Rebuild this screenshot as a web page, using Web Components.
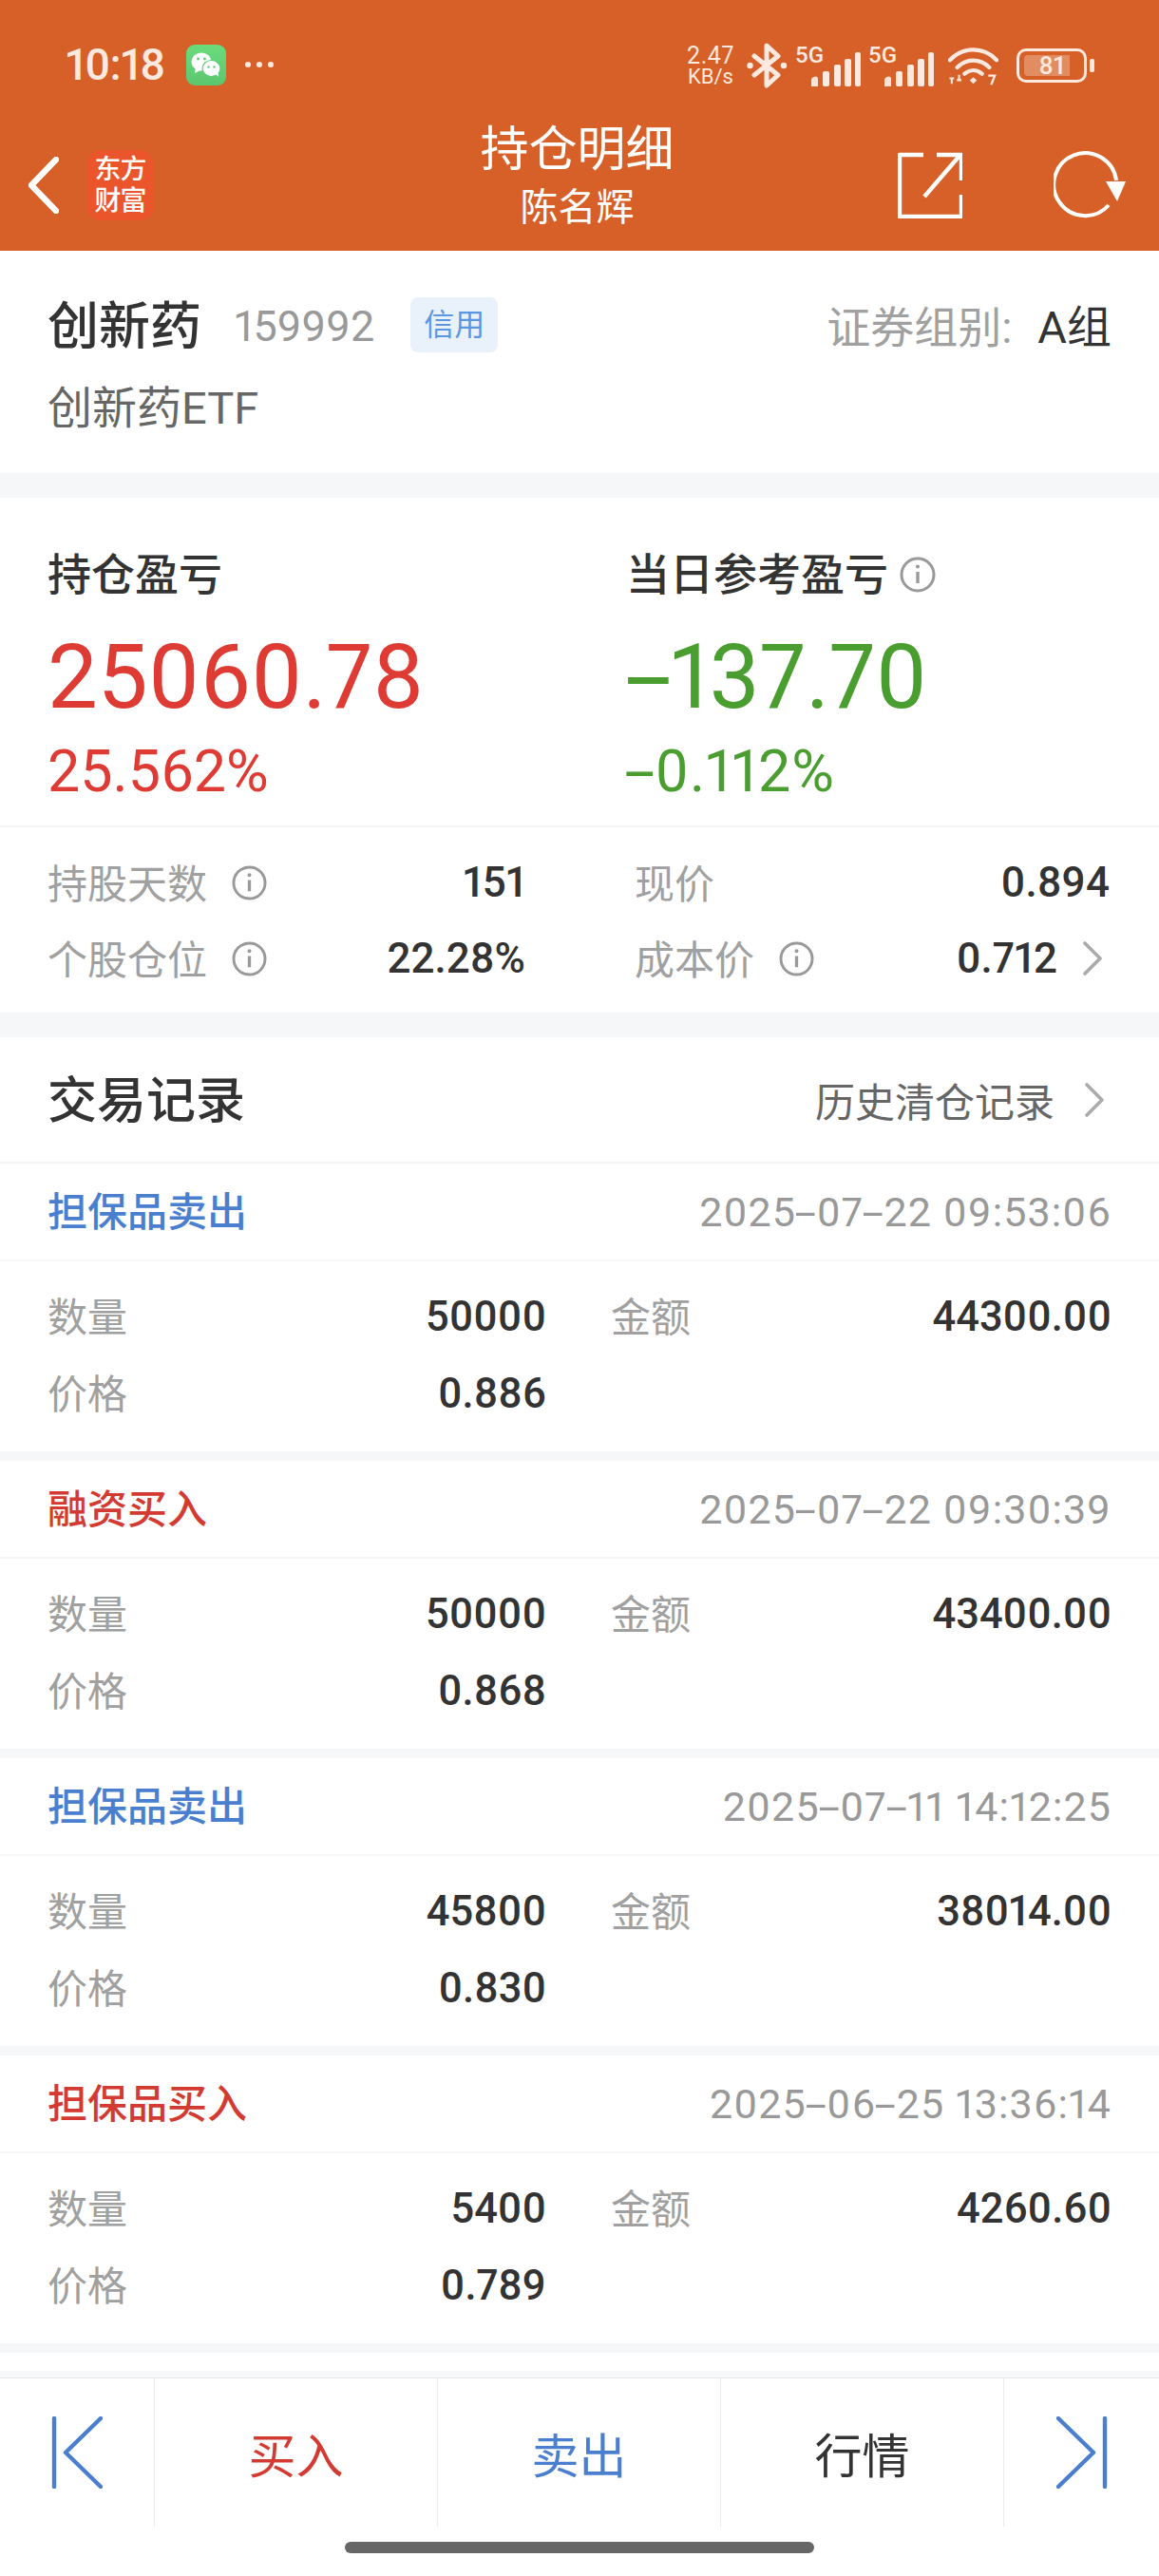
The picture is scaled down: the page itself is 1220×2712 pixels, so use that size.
<!DOCTYPE html>
<html lang="zh">
<head>
<meta charset="utf-8">
<title>持仓明细</title>
<style>
html, body { margin: 0; padding: 0; background: #fff; }
body {
    width: 1220px;
    height: 2712px;
    overflow: hidden;
    display: flex;
    flex-direction: column;
    font-family: Roboto, "Noto Sans CJK SC", sans-serif;
    font-variant-numeric: proportional-nums;
    color: #333;
}
</style>
</head>
<body>
<app-header heading="持仓明细" sub="陈名辉"></app-header>
<stock-card></stock-card>
<profit-panel></profit-panel>
<trade-head></trade-head>
<trade-record tone="sell" name="担保品卖出" time="2025-07-22 09:53:06" qty="50000" amount="44300.00" price="0.886"></trade-record>
<trade-record tone="buy" name="融资买入" time="2025-07-22 09:30:39" qty="50000" amount="43400.00" price="0.868"></trade-record>
<trade-record tone="sell" name="担保品卖出" time="2025-07-11 14:12:25" qty="45800" amount="38014.00" price="0.830"></trade-record>
<trade-record tone="buy" name="担保品买入" time="2025-06-25 13:36:14" qty="5400" amount="4260.60" price="0.789"></trade-record>
<bottom-bar></bottom-bar>

<script>
const INFO = (size) => `<svg width="${size}" height="${size}" viewBox="0 0 38 38" fill="none" stroke="#999" stroke-width="3"><circle cx="19" cy="19" r="17"/><path d="M19 16v12" stroke-width="3.4"/><circle cx="19" cy="10.5" r="2" fill="#999" stroke="none"/></svg>`
const CHEVRON = `<svg width="22" height="38" viewBox="0 0 22 38" fill="none" stroke="#aaa" stroke-width="3.6" stroke-linecap="round" stroke-linejoin="round"><path d="M3 3l16 16L3 35"/></svg>`
// the app font draws a long hyphen, roboto's is short
const DASH_CSS = `.dash { display: inline-block; width: .5em; text-align: center; transform: scaleX(1.9); }`
const dash = (s) => s.replace(/-/g, '<span class="dash">-</span>')

class StatusBar extends HTMLElement {
    constructor() {
        super()
        this.shadow = this.attachShadow({ mode: 'open' })
    }
    connectedCallback() {
        const bars = `<svg class="sig" width="52" height="36" viewBox="0 0 52 36" fill="#fde9df"><path d="M0 36v-6a4 4 0 0 1 7-3v9z" opacity=".95"/><rect x="12" y="20" width="7" height="16" rx="2"/><rect x="24" y="13" width="7" height="23" rx="2"/><rect x="35" y="7" width="7" height="29" rx="2"/><rect x="46" y="0" width="6" height="36" rx="2"/></svg>`
        this.shadow.innerHTML = /*html*/ `
            <style>
:host {
    display: flex;
    height: 118px;
    align-items: flex-start;
    justify-content: space-between;
    padding: 45px 68px 0 69px;
    box-sizing: border-box;
    color: #fde9df;
}
.left, .right { display: flex; align-items: center; }
.time { font-size: 46px; line-height: 46px; font-weight: 500; letter-spacing: -.8px; width: 127px; }
.wx { display: block; }
.dots { display: flex; gap: 6px; margin-left: 20px; }
.dots i { width: 6px; height: 6px; border-radius: 50%; background: #fde9df; display: block; }
.speed { font-size: 22px; line-height: 21px; text-align: center; width: 52px; margin-top: 0; }
.speed div:first-child { font-size: 25px; line-height: 23px; letter-spacing: .6px; }
.bt { margin-left: 12px; }
.net { display: flex; position: relative; width: 69px; height: 44px; margin-left: 8px; align-items: flex-end; justify-content: flex-end; }
.net b { position: absolute; left: 0; top: 0; font-size: 24px; line-height: 22px; font-weight: 500; }
.net .sig { display: block; }
.wifi { margin-left: 15px; }
.bat { margin-left: 19px; position: relative; width: 82px; height: 36px; display: flex; align-items: center; }
.shell { width: 74px; height: 36px; border: 3px solid #fde9df; border-radius: 10px; box-sizing: border-box; display: flex; align-items: center; padding: 4px 5px; }
.fill { width: 82%; height: 100%; background: rgba(253,233,223,.32); border-radius: 4px 0 0 4px; position: relative; }
.num { position: absolute; left: 0; width: 74px; text-align: center; font-size: 26px; line-height: 36px; font-weight: 500; }
.nub { width: 5px; height: 14px; background: #fde9df; border-radius: 2px; margin-left: 3px; }
            </style>
            <div class="left">
                <div class="time">10:18</div>
                <svg class="wx" width="42" height="43" viewBox="0 0 42 43">
                    <defs><linearGradient id="g" x1="0" y1="0" x2="0" y2="1"><stop offset="0" stop-color="#6adb7c"/><stop offset="1" stop-color="#5cc66f"/></linearGradient></defs>
                    <rect width="42" height="43" rx="9" fill="url(#g)"/>
                    <ellipse cx="16" cy="18" rx="10.5" ry="9.5" fill="#fff"/>
                    <path d="M10 24l-1 6 6-3z" fill="#fff"/>
                    <ellipse cx="26.5" cy="25" rx="9.5" ry="8.5" fill="#fff" stroke="#60cd74" stroke-width="1.2"/>
                    <path d="M31 31l3 3-.5-5z" fill="#fff"/>
                    <circle cx="12.5" cy="15" r="1.4" fill="#60cd74"/><circle cx="19.5" cy="15" r="1.4" fill="#60cd74"/>
                    <circle cx="23.5" cy="23.5" r="1.2" fill="#60cd74"/><circle cx="29.5" cy="23.5" r="1.2" fill="#60cd74"/>
                </svg>
                <div class="dots"><i></i><i></i><i></i></div>
            </div>
            <div class="right">
                <div class="speed"><div>2.47</div><div>KB/s</div></div>
                <svg class="bt" width="43" height="48" viewBox="0 0 43 48" fill="none" stroke="#fde9df" stroke-width="5" stroke-linecap="round" stroke-linejoin="round"><path d="M8 14l25 20-12 11V3l12 11L8 34"/><circle cx="3.500" cy="24" r="3.200" fill="#fde9df" stroke="none"/><circle cx="39" cy="24" r="3.200" fill="#fde9df" stroke="none"/></svg>
                <div class="net"><b>5G</b>${bars}</div>
                <div class="net"><b>5G</b>${bars}</div>
                <svg class="wifi" width="53" height="44" viewBox="0 0 55 44" fill="none" stroke="#fde9df" stroke-width="4.400" stroke-linecap="round"><path d="M2 16C16 1 39 1 53 16"/><path d="M10 24c10-10 25-10 35 0"/><path d="M18 31c6-5 13-5 19 0"/><path d="M23.500 38l4 4 4-4-4-3z" fill="#fde9df" stroke="none"/><path d="M4 36v6M1.500 36h5M12 32v6M9.500 38h5" stroke-width="2.200" stroke-linecap="butt"/><path d="M44 33h7l-4 10" stroke-width="2.400" stroke-linecap="butt"/></svg>
                <div class="bat"><div class="shell"><div class="fill"></div></div><div class="num">81</div><div class="nub"></div></div>
            </div>
            `
    }
}

class AppHeader extends HTMLElement {
    constructor() {
        super()
        this.shadow = this.attachShadow({ mode: 'open' })
    }
    connectedCallback() {
        this.shadow.innerHTML = /*html*/ `
            <style>
:host { display: block; background: #d66027; color: #fff; height: 264px; flex: none; }
.nav { display: grid; grid-template-columns: 1fr auto 1fr; height: 146px; padding: 0 35px 0 30px; box-sizing: border-box; }
.left { display: flex; align-items: center; gap: 29px; padding-top: 8px; }
.logo {
    width: 71px; height: 74px; border-radius: 15px; background: #ea552b;
    display: flex; flex-direction: column; align-items: center; justify-content: center;
    font-size: 28px; line-height: 33px; font-weight: 500; letter-spacing: -1px;
}
.mid { text-align: center; }
.t { font-size: 51px; line-height: 60px; margin-top: 10px; }
.s { font-size: 40px; line-height: 52px; margin-top: 5px; }
.right { display: flex; justify-content: flex-end; align-items: center; gap: 96px; padding-top: 8px; }
svg { display: block; }
            </style>
            <status-bar></status-bar>
            <div class="nav">
                <div class="left">
                    <svg width="32" height="60" viewBox="0 0 32 60" fill="none" stroke="#fff" stroke-width="6.400" stroke-linecap="round" stroke-linejoin="round"><path d="M29 3L3 30l26 27"/></svg>
                    <div class="logo"><div>东方</div><div>财富</div></div>
                </div>
                <div class="mid">
                    <div class="t">${this.getAttribute('heading')}</div>
                    <div class="s">${this.getAttribute('sub')}</div>
                </div>
                <div class="right">
                    <svg width="68" height="70" viewBox="0 0 68 70" fill="none" stroke="#fff" stroke-width="4.400" stroke-linejoin="round"><path d="M27 3H2v65h65V45"/><path d="M41 3h26v27"/><path d="M65 4L28 47"/></svg>
                    <svg width="76" height="72" viewBox="0 0 76 72" fill="none"><path d="M58 57A33 33 0 1 1 66 31" stroke="#fff" stroke-width="4"/><path d="M55 32h21l-9 21z" fill="#fff"/></svg>
                </div>
            </div>
            `
    }
}

class StockCard extends HTMLElement {
    constructor() {
        super()
        this.shadow = this.attachShadow({ mode: 'open' })
    }
    connectedCallback() {
        this.shadow.innerHTML = /*html*/ `
            <style>
:host { display: block; height: 260px; flex: none; box-sizing: border-box; padding: 0 50px; border-bottom: 26px solid #f6f7f9; }
.top { display: flex; align-items: center; height: 90px; padding-top: 36px; box-sizing: content-box; }
.name { font-size: 54px; font-weight: 500; line-height: 90px; }
.code { font-size: 45px; color: #999; margin-left: 35px; padding-bottom: 4px; }
.tag { margin-left: 38px; margin-bottom: 6px; width: 92px; height: 58px; line-height: 58px; text-align: center; border-radius: 8px; background: #e9f1fb; color: #5b96e2; font-size: 32px; }
.group { margin-left: auto; font-size: 47px; color: #333; padding-bottom: 10px; }
.group span { color: #a0a0a0; font-size: 46px; margin-right: 27px; }
.full { font-size: 47px; color: #666; line-height: 56px; margin-top: 12px; }
            </style>
            <div class="top">
                <div class="name">创新药</div>
                <div class="code">159992</div>
                <div class="tag">信用</div>
                <div class="group"><span>证券组别:</span>A组</div>
            </div>
            <div class="full">创新药ETF</div>
            `
    }
}

class StatRow extends HTMLElement {
    constructor() {
        super()
        this.shadow = this.attachShadow({ mode: 'open' })
    }
    connectedCallback() {
        const hasInfo = this.hasAttribute('info')
        const hasMore = this.hasAttribute('more')
        this.shadow.innerHTML = /*html*/ `
            <style>
:host { display: flex; align-items: center; height: 80px; }
.l { font-size: 42px; color: #a0a0a0; padding-bottom: 4px; }
svg { display: block; }
.i { margin-left: 26px; }
.v { margin-left: auto; font-size: 44px; font-weight: 500; color: #333; }
.m { margin-left: 26px; margin-right: 7px; }
            </style>
            <div class="l">${this.getAttribute('label')}</div>
            ${hasInfo ? `<div class="i">${INFO(37)}</div>` : ''}
            <div class="v">${this.getAttribute('value')}</div>
            ${hasMore ? `<div class="m">${CHEVRON}</div>` : ''}
            `
    }
}

class ProfitPanel extends HTMLElement {
    constructor() {
        super()
        this.shadow = this.attachShadow({ mode: 'open' })
    }
    connectedCallback() {
        this.shadow.innerHTML = /*html*/ `
            <style>
:host { display: block; height: 568px; flex: none; box-sizing: border-box; border-bottom: 26px solid #f6f7f9; }
.big { display: grid; grid-template-columns: 609px 1fr; padding: 48px 0 0 50px; height: 347px; box-sizing: border-box; border-bottom: 2px solid #f6f6f7; }
.h { display: flex; align-items: center; gap: 12px; font-size: 46px; font-weight: 500; line-height: 66px; }
.a { font-size: 94px; line-height: 110px; margin-top: 20px; }
.p { font-size: 61px; line-height: 70px; margin-top: 9px; }
.red { color: #de3b34; }
.green { color: #4a9d2f; }
.p.green { letter-spacing: 1px; }
svg { display: block; }
.stats { display: grid; grid-template-columns: 503px 500px; column-gap: 115px; padding: 18px 0 0 50px; }
${DASH_CSS}
            </style>
            <div class="big">
                <div>
                    <div class="h">持仓盈亏</div>
                    <div class="a red">25060.78</div>
                    <div class="p red">25.562%</div>
                </div>
                <div>
                    <div class="h">当日参考盈亏${INFO(38)}</div>
                    <div class="a green">${dash('-137.70')}</div>
                    <div class="p green">${dash('-0.112%')}</div>
                </div>
            </div>
            <div class="stats">
                <stat-row label="持股天数" info value="151"></stat-row>
                <stat-row label="现价" value="0.894"></stat-row>
                <stat-row label="个股仓位" info value="22.28%"></stat-row>
                <stat-row label="成本价" info more value="0.712"></stat-row>
            </div>
            `
    }
}

class TradeHead extends HTMLElement {
    constructor() {
        super()
        this.shadow = this.attachShadow({ mode: 'open' })
    }
    connectedCallback() {
        this.shadow.innerHTML = /*html*/ `
            <style>
:host { display: flex; align-items: center; height: 133px; flex: none; box-sizing: border-box; padding: 0 57px 0 50px; border-bottom: 2px solid #f6f6f7; }
.t { font-size: 52px; font-weight: 500; padding-bottom: 6px; }
.h { margin-left: auto; font-size: 42px; color: #666; margin-right: 31px; }
svg { display: block; }
            </style>
            <div class="t">交易记录</div>
            <div class="h">历史清仓记录</div>
            ${CHEVRON}
            `
    }
}

class TradeRecord extends HTMLElement {
    constructor() {
        super()
        this.shadow = this.attachShadow({ mode: 'open' })
    }
    connectedCallback() {
        const tone = this.getAttribute('tone') === 'buy' ? '#d33b32' : '#4a7fd0'
        this.shadow.innerHTML = /*html*/ `
            <style>
:host { display: block; height: 313px; flex: none; box-sizing: border-box; border-bottom: 10px solid #f6f7f9; }
.top { display: flex; justify-content: space-between; align-items: center; height: 103px; padding: 0 50px; box-sizing: border-box; border-bottom: 2px solid #f7f7f8; }
.n { font-size: 42px; font-weight: 500; color: ${tone}; padding-bottom: 6px; }
.d { font-size: 43px; color: #999; letter-spacing: 1.1px; }
.grid { display: grid; grid-template-columns: 525px 527px; column-gap: 68px; padding: 18px 50px 0; }
.c { display: flex; justify-content: space-between; align-items: center; height: 81px; }
.l { font-size: 42px; color: #a0a0a0; padding-bottom: 6px; }
.v { font-size: 43.500px; font-weight: 500; color: #333; }
${DASH_CSS}
            </style>
            <div class="top">
                <div class="n">${this.getAttribute('name')}</div>
                <div class="d">${dash(this.getAttribute('time'))}</div>
            </div>
            <div class="grid">
                <div class="c"><span class="l">数量</span><span class="v">${this.getAttribute('qty')}</span></div>
                <div class="c"><span class="l">金额</span><span class="v">${this.getAttribute('amount')}</span></div>
                <div class="c"><span class="l">价格</span><span class="v">${this.getAttribute('price')}</span></div>
            </div>
            `
    }
}

class BottomBar extends HTMLElement {
    constructor() {
        super()
        this.shadow = this.attachShadow({ mode: 'open' })
    }
    connectedCallback() {
        this.shadow.innerHTML = /*html*/ `
            <style>
:host { display: block; flex: none; padding-top: 19px; }
.rim { height: 7px; background: #f6f7f9; border-bottom: 1px solid #e8e9ec; box-sizing: content-box; }
.bar { display: grid; grid-template-columns: 163px 298px 298px 298px 163px; height: 156px; }
.cell { display: flex; align-items: center; justify-content: center; font-size: 50px; border-right: 1px solid #ececee; }
.cell:last-child { border-right: 0; }
.red { color: #d33b32; }
.blue { color: #4a7fd0; }
svg { display: block; }
.home { height: 52px; display: flex; justify-content: center; align-items: flex-start; padding-top: 16px; box-sizing: border-box; }
.home i { display: block; width: 494px; height: 12px; border-radius: 6px; background: #666; }
            </style>
            <div class="rim"></div>
            <div class="bar">
                <div class="cell"><svg width="54" height="76" viewBox="0 0 54 76" fill="none" stroke="#4a7fd0" stroke-width="4.400" stroke-linecap="round" stroke-linejoin="round"><path d="M3 2v72"/><path d="M52 2L15 38l37 36"/></svg></div>
                <div class="cell red">买入</div>
                <div class="cell blue">卖出</div>
                <div class="cell">行情</div>
                <div class="cell"><svg width="54" height="76" viewBox="0 0 54 76" fill="none" stroke="#4a7fd0" stroke-width="4.400" stroke-linecap="round" stroke-linejoin="round"><path d="M51 2v72"/><path d="M2 2l37 36L2 74"/></svg></div>
            </div>
            <div class="home"><i></i></div>
            `
    }
}

customElements.define('status-bar', StatusBar)
customElements.define('app-header', AppHeader)
customElements.define('stock-card', StockCard)
customElements.define('stat-row', StatRow)
customElements.define('profit-panel', ProfitPanel)
customElements.define('trade-head', TradeHead)
customElements.define('trade-record', TradeRecord)
customElements.define('bottom-bar', BottomBar)
</script>
</body>
</html>
